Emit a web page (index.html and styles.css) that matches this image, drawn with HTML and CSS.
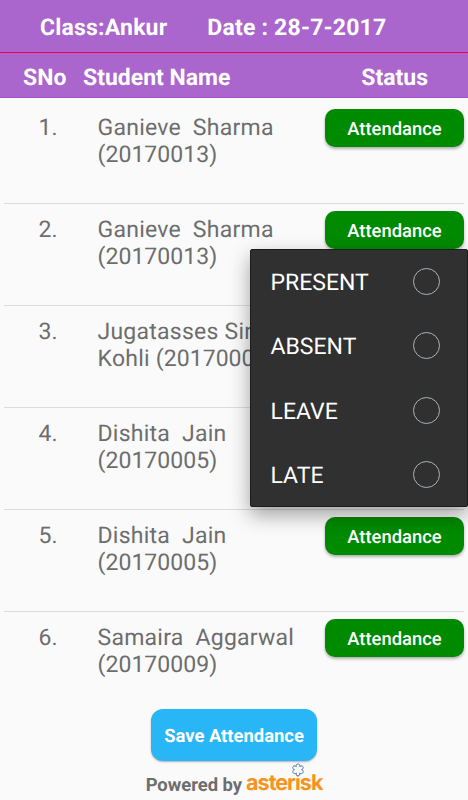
FILE: index.html
```
<!DOCTYPE html>
<html lang="en">

<head>
    <meta charset="UTF-8">
    <meta name="viewport" content="width=device-width, initial-scale=1.0">
    <title>Attendance</title>
    <link rel="stylesheet" href="styles.css">
</head>

<body>
    <header class="class-bar">
        <span class="class-name">Class:Ankur</span>
        <span class="class-date">Date : 28-7-2017</span>
    </header>
    <div class="table-head">
        <span class="head-no">SNo</span>
        <span class="head-name">Student Name</span>
        <span class="head-status">Status</span>
    </div>

    <main class="student-list">
        <div class="student">
            <span class="number">1.</span>
            <span class="name">Ganieve&nbsp; Sharma<br><span class="roll">(20170013)</span></span>
            <button class="btn-status">Attendance</button>
        </div>
        <div class="student">
            <span class="number">2.</span>
            <span class="name">Ganieve&nbsp; Sharma<br><span class="roll">(20170013)</span></span>
            <div class="status-cell">
                <button class="btn-status">Attendance</button>
                <div class="status-menu">
                    <label class="option">PRESENT <input type="radio" name="status"></label>
                    <label class="option">ABSENT <input type="radio" name="status"></label>
                    <label class="option">LEAVE <input type="radio" name="status"></label>
                    <label class="option">LATE <input type="radio" name="status"></label>
                </div>
            </div>
        </div>
        <div class="student">
            <span class="number">3.</span>
            <span class="name">Jugatasses Singh<br>Kohli <span class="roll">(20170007)</span></span>
            <button class="btn-status">Attendance</button>
        </div>
        <div class="student">
            <span class="number">4.</span>
            <span class="name">Dishita&nbsp; Jain<br><span class="roll">(20170005)</span></span>
            <button class="btn-status">Attendance</button>
        </div>
        <div class="student">
            <span class="number">5.</span>
            <span class="name">Dishita&nbsp; Jain<br><span class="roll">(20170005)</span></span>
            <button class="btn-status">Attendance</button>
        </div>
        <div class="student">
            <span class="number">6.</span>
            <span class="name">Samaira&nbsp; Aggarwal<br><span class="roll">(20170009)</span></span>
            <button class="btn-status">Attendance</button>
        </div>
    </main>

    <footer class="footer">
        <button class="btn-save">Save Attendance</button>
        <div class="powered">
            <span>Powered by</span>
            <span class="logo">asterisk
                <svg class="logo-flower" viewBox="0 0 14 14" width="14" height="14">
                    <path d="M5.3 3.6C4.3 0 9.7 0 8.7 3.6C11.4 1 14.2 5.6 10.5 6.6C14.2 7.6 11.4 12.4 8.7 10C9.7 13.7 4.3 13.7 5.3 10C2.6 12.4-.2 7.6 3.5 6.6C-.2 5.6 2.6 1 5.3 3.6Z"/>
                </svg>
            </span>
        </div>
    </footer>
</body>

</html>
```

FILE: styles.css
```
* {
    box-sizing: border-box;
}

body {
    font-family: Roboto, Arial, sans-serif;
    font-size: 23px;
    line-height: 27px;
    text-rendering: geometricPrecision;
    background-color: #fafafa;
    color: #6d6d6d;
    margin: 0;
    height: 800px;
    overflow: hidden;
}

button {
    font-family: inherit;
    text-rendering: inherit;
    color: white;
    border: none;
    padding: 2px 0 0;
    cursor: pointer;
}

.class-bar,
.table-head {
    display: flex;
    background-color: #aa66cc;
    color: white;
    font-weight: 700;
}

.class-bar {
    height: 53px;
    padding: 14px 0 0 40px;
    gap: 40px;
    letter-spacing: 0.2px;
    border-bottom: 1px solid #f5004f;
}

.table-head {
    height: 45px;
    padding: 11px 40px 0 23px;
    border-bottom: 1px solid #a052c6;
}

.head-no {
    width: 60px;
}

.head-status {
    margin-left: auto;
}

.student-list {
    padding: 4px 4px 0;
}

.student {
    display: flex;
    align-items: flex-start;
    height: 102px;
    padding-top: 7px;
    border-bottom: 1px solid #dcdcdc;
}

.student:last-child {
    height: 97px;
    border-bottom: none;
}

.number {
    width: 93.5px;
    padding: 5px 0 0 34.5px;
}

.name {
    width: 227.5px;
    padding-top: 5px;
    letter-spacing: 0.25px;
    white-space: nowrap;
}

.roll {
    letter-spacing: 0.05px;
}

.btn-status {
    display: block;
    width: 139px;
    height: 38px;
    border-radius: 10px;
    background-color: #008a00;
    font-size: 18.4px;
    font-weight: 500;
    box-shadow: 0 2px 3px rgba(0, 0, 0, 0.3);
}

.status-cell {
    position: relative;
}

/* opens over the rows below the clicked button */
.status-menu {
    position: absolute;
    top: 38px;
    right: -4px;
    z-index: 1;
    width: 218px;
    height: 258px;
    background-color: #303030;
    border: 1px solid #1c1c1c;
    border-radius: 2px;
    box-shadow: 0 8px 20px rgba(0, 0, 0, 0.36);
}

.option {
    display: flex;
    align-items: center;
    justify-content: space-between;
    height: 64.3px;
    padding: 1px 27px 0 19.5px;
    color: white;
}

.option input {
    appearance: none;
    position: relative;
    top: -1px;
    width: 27px;
    height: 27px;
    margin: 0;
    border: 1.5px solid #a9b2b7;
    border-radius: 50%;
}

.footer {
    display: flex;
    flex-direction: column;
    align-items: center;
}

.btn-save {
    width: 166px;
    height: 52px;
    border-radius: 12px;
    background-color: #29b6f6;
    font-size: 18.4px;
    font-weight: 700;
    box-shadow: 0 1px 2px rgba(0, 0, 0, 0.3);
}

.powered {
    display: flex;
    gap: 4px;
    padding-top: 11px;
    font-size: 18.4px;
    font-weight: 700;
}

.logo {
    position: relative;
    top: -2px;
    font-family: Inter, sans-serif;
    font-size: 21.5px;
    font-weight: 700;
    letter-spacing: -1px;
    color: #f7941e;
}

.logo-flower {
    position: absolute;
    left: 45px;
    top: -7px;
    fill: #fafafa;
    stroke: #4a78ae;
    stroke-width: 1;
}
```
